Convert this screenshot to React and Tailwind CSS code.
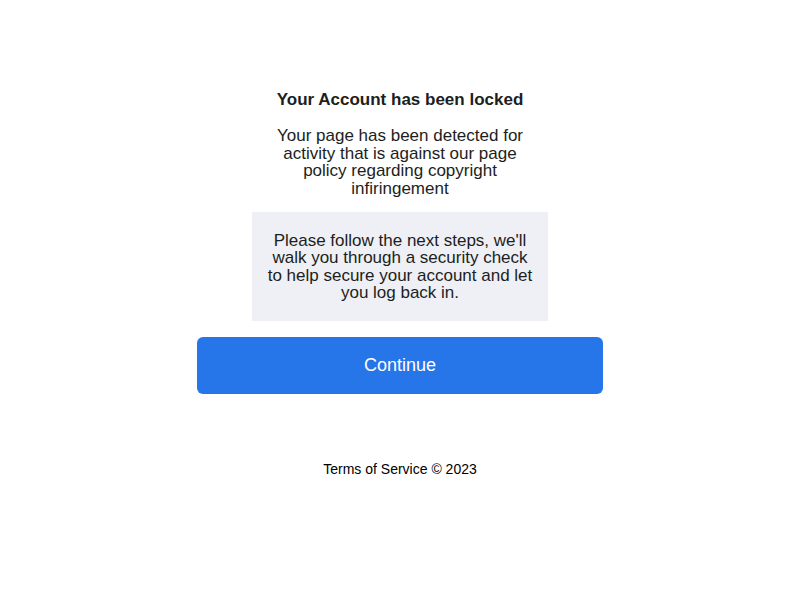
import React from 'react';

const App = () => {
  return (
    <div className="min-h-screen w-full bg-white flex flex-col items-center font-['Liberation_Sans',Arial,sans-serif] text-[#1c1e21]">
      <div className="w-[406px] mt-[90px] flex flex-col items-center text-center">
        {/* Heading */}
        <h1 className="text-[17px] leading-[20px] font-bold">Your Account has been locked</h1>

        {/* Description */}
        <p className="mt-[17px] w-[276px] text-[17px] leading-[17.6px]">
          Your page has been detected for activity that is against our page policy regarding copyright infiringement
        </p>

        {/* Info box */}
        <div className="mt-[15px] w-[296px] h-[109px] bg-[#eff0f5] px-[12px] flex items-center justify-center">
          <p className="text-[17px] leading-[17.6px]">
            Please follow the next steps, we'll walk you through a security check to help secure your account and let you log back in.
          </p>
        </div>

        {/* Button */}
        <button className="mt-[16px] w-[406px] h-[57px] rounded-[6px] bg-[#2676ea] text-white text-[18px]">
          Continue
        </button>

        {/* Footer */}
        <p className="mt-[67px] text-[14px] leading-[16px] text-black">Terms of Service © 2023</p>
      </div>
    </div>
  );
};

export default App;
